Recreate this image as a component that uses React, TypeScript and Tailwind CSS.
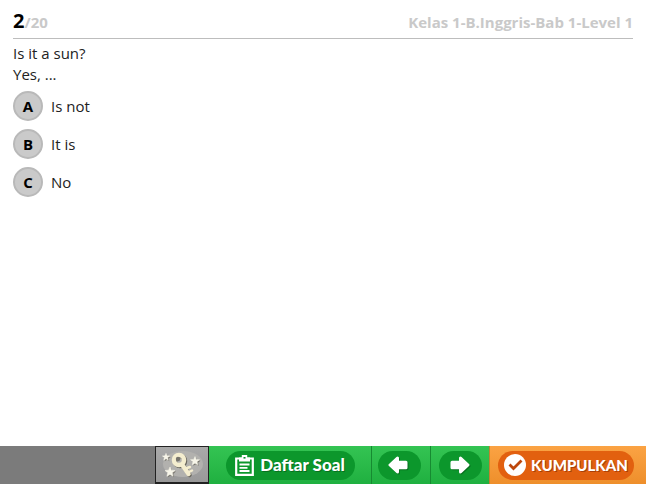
import { clsx } from "clsx";
import { useState } from "react";

const options = [
  { key: "A", text: "Is not" },
  { key: "B", text: "It is" },
  { key: "C", text: "No" },
];

const STAR = "M0 -5 L1.4 -1.8 L5 -1.5 L2.3 0.8 L3.1 4.3 L0 2.4 L-3.1 4.3 L-2.3 0.8 L-5 -1.5 L-1.4 -1.8 Z";

const Stars = () => (
  <>
    <path d={STAR} transform="translate(10 10) scale(.75)" />
    <path d={STAR} transform="translate(14 25)" />
    <path d={STAR} transform="translate(39 14) scale(.9)" />
  </>
);

const KeyIcon = () => (
  <svg viewBox="0 0 52 36" className="h-9 w-full" aria-hidden="true">
    <ellipse cx="27" cy="17" rx="20" ry="13" fill="#b2b1ae" />
    <g fill="#77746c" transform="translate(1 1)">
      <Stars />
    </g>
    <g fill="#f7f5e9" stroke="#f7f5e9" strokeWidth=".5" strokeLinejoin="round">
      <Stars />
    </g>
    <g fill="none" strokeLinecap="round" strokeLinejoin="round">
      <g stroke="#6b685f" transform="translate(1 1)">
        <circle cx="23" cy="13" r="5" strokeWidth="4.5" />
        <path d="M27 19 L32.5 27" strokeWidth="4.5" />
      </g>
      <g stroke="#f4edcf">
        <circle cx="23" cy="13" r="5" strokeWidth="4.5" />
        <path d="M27 19 L32.5 27" strokeWidth="4.5" />
        <path d="M31 21 L34 20 M33 25 L36 23.5" strokeWidth="2.5" />
      </g>
    </g>
    <circle cx="22" cy="12" r="2.2" fill="#77746c" />
  </svg>
);

const ClipboardIcon = () => (
  <svg viewBox="0 0 19 21" className="h-[21px] w-[19px]" aria-hidden="true">
    <path d="M1.2 3.5 H17.8 V19.8 H1.2 Z" fill="none" stroke="#fff" strokeWidth="2.2" />
    <path d="M4 6.5 V2.5 H6.8 V0 H12.2 V2.5 H15 V6.5 Z" fill="#fff" />
    <path d="M8.5 2 H10.5 V3.6 H8.5 Z" fill="#0c8d2c" />
    <path d="M4.5 9.5 H14.5 M4.5 12.8 H12.5 M4.5 16 H14.5" stroke="#fff" strokeWidth="1.8" />
  </svg>
);

const ArrowIcon = ({ right }: { right?: boolean }) => (
  <svg viewBox="0 0 22 20" className="h-5 w-[22px]" aria-hidden="true">
    <g strokeWidth="3" strokeLinejoin="round">
      <path
        d={
          right
            ? "M20 11 L12.5 4 V8.2 H4 V13.8 H12.5 V18 Z"
            : "M3 11 L10.5 4 V8.2 H19 V13.8 H10.5 V18 Z"
        }
        fill="#08701f"
        stroke="#08701f"
      />
      <path
        d={
          right
            ? "M19 10 L11.5 3 V7.2 H3 V12.8 H11.5 V17 Z"
            : "M2 10 L9.5 3 V7.2 H18 V12.8 H9.5 V17 Z"
        }
        fill="#fff"
        stroke="#fff"
      />
    </g>
  </svg>
);

const CheckIcon = () => (
  <svg viewBox="0 0 22 22" className="size-[22px]" aria-hidden="true">
    <circle cx="11" cy="11" r="11" fill="#fff" />
    <path d="M5.5 10.5 L9.5 14.5 L17.5 6.5" fill="none" stroke="#bd470c" strokeWidth="2.8" />
  </svg>
);

const green = "flex items-center justify-center bg-linear-to-b from-[#34c453] to-[#1fb040]";
const pill = "flex h-[29px] items-center justify-center rounded-full bg-[#0c972c]";

export default function App() {
  const [answer, setAnswer] = useState("");

  return (
    <div className="flex min-h-screen flex-col bg-white font-['Open_Sans',sans-serif] text-[#222]">
      <header className="mx-[13px] flex items-baseline justify-between border-b border-[#bdbdbd] pt-[7px] pb-[3px] text-[15px] font-bold text-[#c9c9c9]">
        <div className="flex items-baseline">
          <span className="text-xl text-black">2</span>
          <span>/20</span>
        </div>
        <h1>Kelas 1-B.Inggris-Bab 1-Level 1</h1>
      </header>

      <main className="grow px-[13px] pt-1">
        <form>
          <fieldset>
            <legend className="text-[15px] leading-[21px]">
              Is it a sun?
              <br />
              Yes, ...
            </legend>
            <div className="flex flex-col items-start gap-2 pt-[6px]">
              {options.map((o) => (
                <label key={o.key} className="flex cursor-pointer items-center gap-2 text-[15px]">
                  <input
                    type="radio"
                    name="answer"
                    value={o.key}
                    checked={answer === o.key}
                    onChange={() => setAnswer(o.key)}
                    className="peer sr-only"
                  />
                  <span className="flex size-[30px] items-center justify-center rounded-full border-2 border-[#b9b9b9] bg-[#cacaca] font-bold text-black peer-checked:bg-[#8fd39f]">
                    {o.key}
                  </span>
                  <span>{o.text}</span>
                </label>
              ))}
            </div>
          </fieldset>
        </form>
      </main>

      <footer className="flex h-[38px] items-stretch justify-end bg-[#7b7b7b] font-[Lato,sans-serif] text-[17px] font-black text-white">
        <button
          type="button"
          aria-label="Kunci jawaban"
          className="w-[54px] border border-b-2 border-[#222] bg-linear-to-b from-[#a9a9a9] to-[#999]"
        >
          <KeyIcon />
        </button>
        <button type="button" className={clsx(green, "w-[162px]")}>
          <span className={clsx(pill, "w-[129px] gap-[6px]")}>
            <ClipboardIcon />
            <span className="text-shadow-[1px_1px_0_#08701f]">Daftar Soal</span>
          </span>
        </button>
        <button
          type="button"
          aria-label="Sebelumnya"
          className={clsx(green, "w-[59px] border-l border-[#168a31] pr-1")}
        >
          <span className={clsx(pill, "w-[43px]")}>
            <ArrowIcon />
          </span>
        </button>
        <button
          type="button"
          aria-label="Berikutnya"
          className={clsx(green, "w-[59px] border-l border-[#168a31]")}
        >
          <span className={clsx(pill, "w-[43px]")}>
            <ArrowIcon right />
          </span>
        </button>
        <button
          type="button"
          className="flex w-[157px] items-center justify-center border-l border-[#c3812f] bg-linear-to-b from-[#fba343] to-[#ee8f2b] pr-1"
        >
          <span className="flex h-[29px] w-[136px] items-center justify-center gap-[5px] rounded-full bg-[#e2600f]">
            <CheckIcon />
            <span className="text-[15px] text-shadow-[1px_1px_0_#a83f08]">KUMPULKAN</span>
          </span>
        </button>
      </footer>
    </div>
  );
}
